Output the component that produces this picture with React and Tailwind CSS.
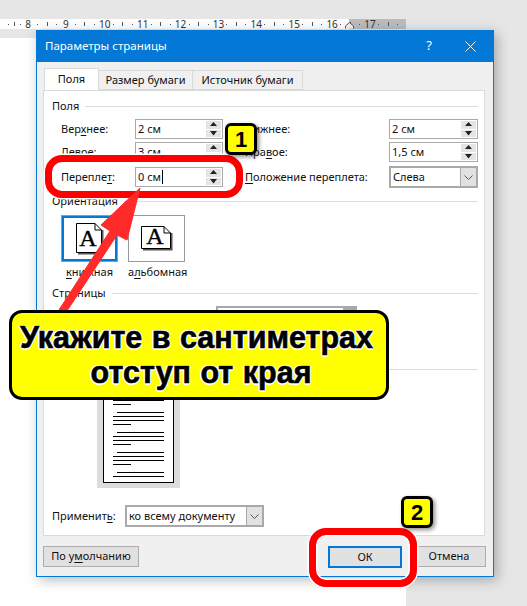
import React from 'react'

const rulerCells = ['', 8, 9, 10, 11, 12, 13, 14, 15, 16, 17]

const Ruler = () => (
  <div className="absolute left-0 top-[19px] h-[10px] w-[406px] bg-white">
    <div className="absolute left-[349px] top-0 h-full w-[57px] bg-[#bcbcbc]" />
    <div className="relative flex h-full">
      {rulerCells.map((n, i) => (
        <div key={i} className={`flex shrink-0 items-center justify-end text-[10px] leading-[10px] text-[#333] ${i === 0 ? 'w-[23.25px]' : 'w-[37.9px]'}`}>
          <span className="w-[9.5px] whitespace-nowrap text-center">{n}</span>
          <span className="flex w-[9.5px] justify-center"><i className="block h-px w-px bg-[#555]" /></span>
          <span className="flex w-[9.5px] justify-center"><i className="block h-[4px] w-px bg-[#555]" /></span>
          <span className="flex w-[9.4px] justify-center"><i className="block h-px w-px bg-[#555]" /></span>
        </div>
      ))}
    </div>
    <svg className="absolute left-[345px] top-[3px]" width="9" height="7" viewBox="0 0 9 7">
      <path d="M0.5 6.5V4L4.5 0.5L8.5 4V6.5" fill="#f0f0f0" stroke="#555" />
    </svg>
  </div>
)

const Ul = ({ children }) => <span className="underline underline-offset-2">{children}</span>

const Spinner = () => (
  <div className="flex h-full w-[15px] flex-col gap-px py-px">
    <div className="flex flex-1 items-center justify-center bg-[#e4e4e4]">
      <svg width="7" height="6" viewBox="0 0 7 6"><path d="M3.5 0L7 4H0Z" fill="#222" /></svg>
    </div>
    <div className="flex flex-1 items-center justify-center bg-[#e4e4e4]">
      <svg width="7" height="6" viewBox="0 0 7 6"><path d="M0 1H7L3.5 5.5Z" fill="#222" /></svg>
    </div>
  </div>
)

const SpinInput = ({ value, caret, className }) => (
  <div className={`flex h-[20px] items-center justify-between border border-[#a9a9a9] bg-white pl-[2px] pr-[1px] ${className}`}>
    <span className="flex items-center">
      {value}
      {caret && <i className="ml-px block h-[14px] w-px bg-black" />}
    </span>
    <Spinner />
  </div>
)

const Chevron = () => (
  <svg width="9" height="5" viewBox="0 0 9 5" fill="none" stroke="#555"><path d="M0.5 0.5L4.5 4.5L8.5 0.5" /></svg>
)

const Select = ({ value, className }) => (
  <div className={`flex items-center justify-between border-2 border-[#a9a9a9] bg-white pl-[2px] ${className}`}>
    <span>{value}</span>
    <div className="flex h-full w-[16px] items-center justify-center bg-[#e1e1e1] border-l border-[#a9a9a9]">
      <Chevron />
    </div>
  </div>
)

const SectionHead = ({ title, className }) => (
  <div className={`flex h-[16px] items-center gap-[6px] ${className}`}>
    <span>{title}</span>
    <div className="h-px flex-1 bg-[#dcdcdc]" />
  </div>
)

const PageIcon = ({ w, h, letterY }) => (
  <svg width={w + 2} height={h + 2} viewBox={`0 0 ${w + 2} ${h + 2}`}>
    <path d={`M${w} 7H${w + 1.5}V${h + 1.5}H2V${h}H${w}Z`} fill="#555" />
    <path d={`M0.5 0.5H${w - 7}L${w - 0.5} 7V${h - 0.5}H0.5Z`} fill="white" stroke="black" />
    <path d={`M${w - 7} 0.5V7H${w - 0.5}`} fill="none" stroke="black" />
    <text x={w / 2 - 1} y={letterY} textAnchor="middle" fontSize="24" fontFamily="'Liberation Serif', serif" stroke="black" strokeWidth="0.4" fill="black">A</text>
  </svg>
)

const previewGroups = [392, 412, 432, 452, 472]

const Preview = () => (
  <div className="ml-[45px] mt-[-1px] h-[112px] w-[83px] bg-[#dcdcdc]">
    <div className="ml-[6px] h-[107px] w-[71px] border border-black bg-white px-[9px] pt-[15px]">
      {previewGroups.map((y, g) => (
        <div key={y} className="mb-[7px] flex flex-col gap-[3px]">
          <div className="ml-[4px] h-px bg-black" />
          <div className="h-px bg-black" />
          {g < 4 && <div className="h-px bg-black" />}
          {g < 4 && <div className="h-px w-[18px] bg-black" />}
        </div>
      ))}
    </div>
  </div>
)

const Badge = ({ n, className }) => (
  <div className={`absolute flex h-[32px] w-[32px] items-center justify-center rounded-[6px] border-[3px] border-black bg-[#ffff00] text-[22px] font-bold text-black shadow-[2px_2px_4px_rgba(0,0,0,0.45)] font-['Liberation_Sans',sans-serif] ${className}`}>
    {n}
  </div>
)

const Frame = ({ className }) => (
  <div className={`absolute rounded-[17px] border-[7px] border-[#ff0000] shadow-[0_0_0_1.5px_white,inset_0_0_0_1.5px_white] ${className}`} />
)

export default function App() {
  return (
    <div className="relative h-[606px] w-[527px] overflow-hidden bg-[#e6e6e6] font-['Noto_Sans',sans-serif] text-[11px] text-[#111]">
      <div className="absolute left-0 top-[38px] h-[568px] w-[406px] bg-white" />
      <Ruler />

      <div className="absolute left-[36px] top-[30px] h-[547px] w-[458px] border border-[#0478d7] bg-[#f0f0f0] shadow-[3px_3px_12px_rgba(0,0,0,0.28)]">
        <div className="flex h-[31px] items-center bg-[#0478d7] pb-px pl-[8px] text-[11.5px] text-white">
          <span className="flex-1">Параметры страницы</span>
          <span className="mr-[33px] text-[13px]">?</span>
          <svg className="mr-[17px]" width="11" height="11" viewBox="0 0 11 11" stroke="white" fill="none">
            <path d="M0.5 0.5L10.5 10.5M10.5 0.5L0.5 10.5" />
          </svg>
        </div>

        <div className="px-[6px] pt-[7px]">
          <div className="flex h-[21px] items-end pl-px">
            <div className="relative z-10 flex h-[22px] w-[55px] items-center justify-center border border-b-0 border-[#d9d9d9] bg-white">Поля</div>
            <div className="flex h-[20px] w-[94px] items-center justify-center border-y border-r border-[#d9d9d9] bg-[#f0f0f0]">Размер бумаги</div>
            <div className="flex h-[20px] w-[110px] items-center justify-center border-y border-r border-[#d9d9d9] bg-[#f0f0f0]">Источник бумаги</div>
          </div>

          <div className="h-[446px] w-[442px] border border-[#d9d9d9] bg-white pl-[8px] pr-[6px] pt-[7px]">
            <SectionHead title="Поля" />
            <div className="mt-[5px] flex flex-col">
              <div className="flex h-[23px] items-start pl-[9px]">
                <span className="w-[74px] leading-[20px]">Вер<Ul>х</Ul>нее:</span>
                <SpinInput value="2 см" className="w-[88px]" />
                <span className="ml-[22px] w-[144px] leading-[20px]"><Ul>Н</Ul>ижнее:</span>
                <SpinInput value="2 см" className="w-[89px]" />
              </div>
              <div className="flex h-[23px] items-start pl-[9px]">
                <span className="w-[74px] leading-[20px]"><Ul>Л</Ul>евое:</span>
                <SpinInput value="3 см" className="w-[88px]" />
                <span className="ml-[22px] w-[144px] leading-[20px]">Пра<Ul>в</Ul>ое:</span>
                <SpinInput value="1,5 см" className="w-[89px]" />
              </div>
              <div className="flex h-[24px] items-center pl-[9px]">
                <span className="w-[74px]">Перепле<Ul>т</Ul>:</span>
                <SpinInput value="0 см" caret className="w-[88px]" />
                <span className="ml-[22px] w-[144px]"><Ul>П</Ul>оложение переплета:</span>
                <Select value="Слева" className="h-[22px] w-[89px]" />
              </div>
            </div>

            <SectionHead title="Ориентация" className="mt-[4px]" />
            <div className="mt-[6px] flex gap-[10px] pl-[9px]">
              <div className="flex h-[47px] w-[57px] items-center justify-center border border-[#999] bg-white shadow-[inset_0_0_0_2px_#0478d7]">
                <PageIcon w={26} h={30} letterY={23} />
              </div>
              <div className="flex h-[47px] w-[57px] items-center justify-center border border-[#999] bg-white">
                <PageIcon w={30} h={23} letterY={18} />
              </div>
            </div>
            <div className="mt-[2px] flex gap-[10px] pl-[9px]">
              <span className="w-[57px] text-center"><Ul>к</Ul>нижная</span>
              <span className="w-[57px] whitespace-nowrap text-center">а<Ul>л</Ul>ьбомная</span>
            </div>

            <SectionHead title="Страницы" className="mt-[4.5px]" />
            <div className="mt-[5px] ml-[164px] flex h-[20px] w-[141px] justify-end border-2 border-[#a9a9a9] bg-white">
              <div className="w-[12px] bg-[#a9a9a9]" />
            </div>

            <SectionHead title="Образец" className="mt-[35px]" />
            <Preview />

            <div className="mt-[17px] flex items-center">
              <span className="w-[73px]">Применит<Ul>ь</Ul>:</span>
              <Select value="ко всему документу" className="h-[22px] w-[139px]" />
            </div>
          </div>

          <div className="mt-[10px] flex">
            <button className="h-[21px] w-[96px] border border-[#adadad] bg-[#e1e1e1]">По у<Ul>м</Ul>олчанию</button>
            <button className="ml-[189px] h-[22px] w-[74px] border-2 border-[#0478d7] bg-[#e1e1e1]">ОК</button>
            <button className="ml-[10px] h-[21px] w-[74px] border border-[#adadad] bg-[#e1e1e1]">Отмена</button>
          </div>
        </div>
      </div>

      <Frame className="left-[45px] top-[155px] h-[43px] w-[198px]" />
      <Frame className="left-[309px] top-[528px] h-[59px] w-[108px]" />
      <Badge n="1" className="left-[225px] top-[123px]" />
      <Badge n="2" className="left-[401px] top-[496px]" />

      <svg className="absolute left-0 top-0" width="527" height="606" viewBox="0 0 527 606">
        <path d="M140 188L101 225L110 231L57 313L63 317L117 235L127 240Z" fill="#ff2a2a" stroke="#ff2a2a" strokeLinejoin="round" />
      </svg>

      <div className="absolute left-[9px] top-[310px] flex h-[90px] w-[380px] flex-col items-center justify-center rounded-[13px] border-[3px] border-black bg-[#ffff00] text-[30.5px] font-bold leading-[35px] text-black [word-spacing:1px] [-webkit-text-stroke:0.6px_black] [text-shadow:1.5px_0_0_white,-1.5px_0_0_white,0_1.5px_0_white,0_-1.5px_0_white,1px_1px_0_white,-1px_1px_0_white,1px_-1px_0_white,-1px_-1px_0_white] font-['Liberation_Sans',sans-serif]">
        <span className="mr-[5px]">Укажите в сантиметрах</span>
        <span className="ml-[4px]">отступ от края</span>
      </div>
    </div>
  )
}
